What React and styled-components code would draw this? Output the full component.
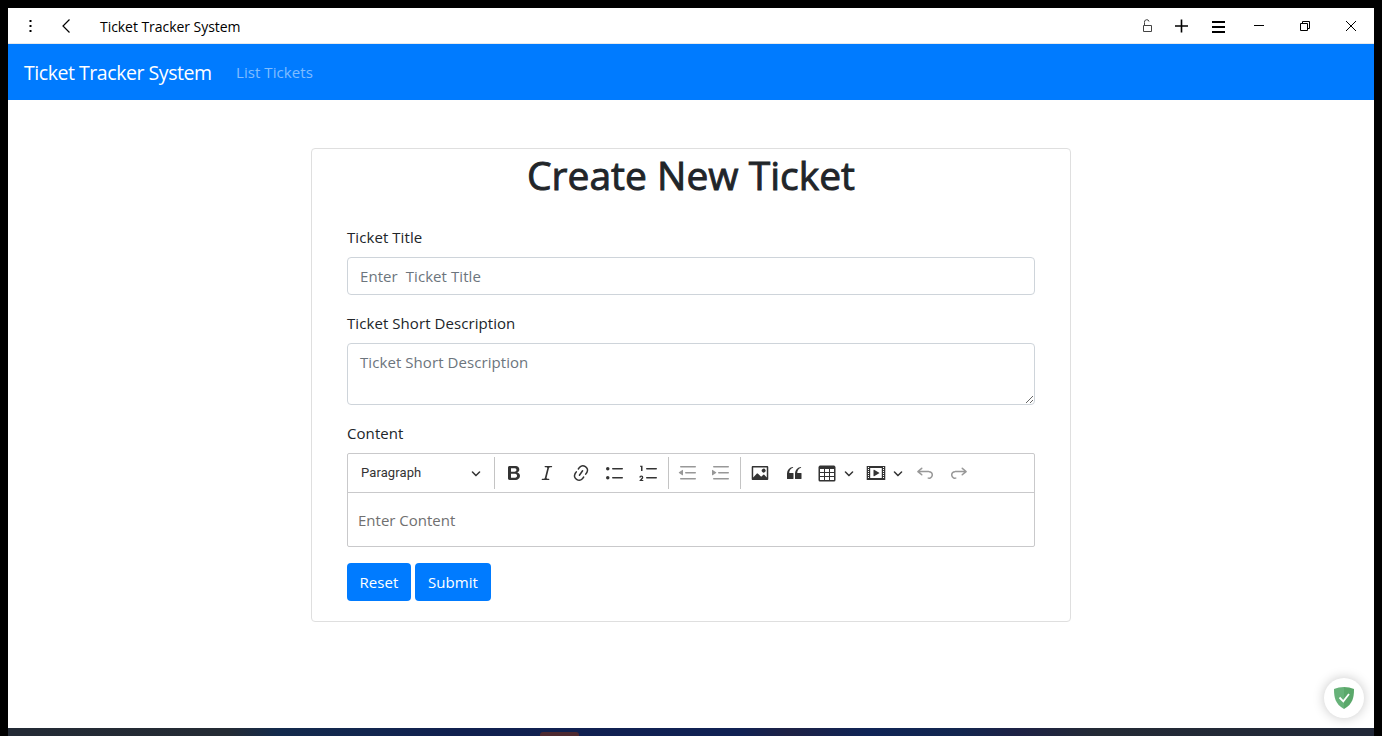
import React from "react";
import styled, { createGlobalStyle } from "styled-components";

const uiFont = `"Segoe UI", "Open Sans", "Noto Sans", sans-serif`;

const GlobalStyle = createGlobalStyle`
  *, *::before, *::after { box-sizing: border-box; }
  body { margin: 0; background: #000; overflow: hidden; }
  input, textarea, button { font: inherit; letter-spacing: inherit; }
`;

const Screen = styled.div`
  display: flex;
  flex-direction: column;
  width: 100vw;
  height: 100vh;
  padding: 8px 8px 0;
  background: #000;
  font-family: ${uiFont};
  font-size: 15px;
  letter-spacing: 0.07px;
  line-height: 24px;
  color: #212529;
`;

const Window = styled.div`
  position: relative;
  flex: 1;
  min-height: 0;
  display: flex;
  flex-direction: column;
  background: #fff;
`;

const TitleBar = styled.header`
  display: flex;
  align-items: center;
  height: 36px;
  padding: 0 15px;
  border-bottom: 1px solid #e6e9ec;
  color: #000;
`;

const WindowTitle = styled.span`
  flex: 1;
  margin-left: 25px;
  padding-top: 2px;
  font-size: 14px;
  letter-spacing: -0.05px;
`;

const BarIcon = styled.svg`
  width: 16px;
  height: 16px;
  margin-left: ${(p) => p.$gap || 0}px;
  fill: none;
  stroke: ${(p) => p.$color || "#000"};
  stroke-width: ${(p) => p.$weight || 1};
  flex: none;
`;

const Navbar = styled.nav`
  display: flex;
  align-items: center;
  height: 56px;
  flex: none;
  padding: 0 16px;
  background: #007bff;
`;

const Brand = styled.a`
  padding-top: 2px;
  font-size: 19.5px;
  line-height: 30px;
  letter-spacing: -0.45px;
  color: #fff;
  width: 188px;
  white-space: nowrap;
  margin-right: 24px;
`;

const NavLink = styled.a`
  color: rgba(255, 255, 255, 0.5);
  white-space: nowrap;
`;

const Page = styled.main`
  display: flex;
  justify-content: center;
  padding-top: 48px;
`;

const Card = styled.section`
  width: 760px;
  height: 474px;
  border: 1px solid #dfdfdf;
  border-radius: 4px;
`;

const Heading = styled.h1`
  margin: 0 0 8px;
  font-size: 39px;
  font-weight: 500;
  -webkit-text-stroke: 0.9px currentColor;
  line-height: 51px;
  height: 48px;
  text-align: center;
  white-space: nowrap;
  letter-spacing: 0;
`;

const Form = styled.form`
  padding: 20px 35px;
`;

const Group = styled.div`
  margin-bottom: 16px;
`;

const Label = styled.label`
  display: block;
  margin-bottom: 8px;
`;

const Field = styled.input`
  display: block;
  width: 100%;
  height: ${(p) => p.$height}px;
  padding: 6px 12px;
  border: 1px solid #ced4da;
  border-radius: 4px;
  background: #fff;
  outline: none;
  white-space: pre;
  &::placeholder { color: #6c757d; opacity: 1; }
`;

const Editor = styled.div`
  height: 94px;
  border: 1px solid #c9c9cb;
  border-radius: 2px;
`;

const Toolbar = styled.div`
  display: flex;
  align-items: center;
  height: 39px;
  border-bottom: 1px solid #c9c9cb;
  color: #333;
`;

const HeadingSelect = styled.div`
  display: flex;
  align-items: center;
  justify-content: space-between;
  width: 146px;
  padding: 0 13px;
  font-family: Roboto, Arial, sans-serif;
  font-size: 13px;
  letter-spacing: 0.1px;
`;

const Separator = styled.span`
  width: 1px;
  height: 32px;
  background: #c4c4c4;
`;

const Tool = styled.span`
  display: flex;
  align-items: center;
  justify-content: center;
  width: ${(p) => p.$width || 33.5}px;
  margin-left: ${(p) => p.$gap || 0}px;
  opacity: ${(p) => (p.$disabled ? 0.5 : 1)};
`;

const Glyph = styled.svg`
  width: ${(p) => p.$size || 20}px;
  height: ${(p) => p.$size || 20}px;
  fill: currentColor;
  flex: none;
`;

const EditorBody = styled.div`
  padding: 15px 10px;
  letter-spacing: 0;
  color: #707070;
`;

const Actions = styled.div`
  display: flex;
  gap: 4px;
`;

const Button = styled.button`
  width: ${(p) => p.$width}px;
  height: 38px;
  padding: 0;
  border: 0;
  border-radius: 4px;
  background: #007bff;
  color: #fff;
  text-align: center;
`;

const ShieldBadge = styled.div`
  position: absolute;
  right: 10px;
  bottom: 10px;
  width: 40px;
  height: 40px;
  display: flex;
  align-items: center;
  justify-content: center;
  border-radius: 50%;
  background: #fff;
  box-shadow: 0 0 12px rgba(0, 0, 0, 0.22);
`;

const Taskbar = styled.div`
  display: flex;
  align-items: flex-end;
  height: 8px;
  padding-left: 532px;
  background: linear-gradient(90deg, #232a35 0, #242b34 220px, #132a4c 270px, #12264f 360px, #10204f 450px, #102154 730px, #1d2145 780px, #0f2456 860px, #12264f 950px, #1d2145 1010px, #232a35 1090px, #212838 100%);
`;

const TaskItem = styled.span`
  width: 39px;
  height: 4px;
  border-radius: 3px 3px 0 0;
  background: #4d2930;
`;

const paths = {
  bold: "M10.187 17H5.773c-.637 0-1.092-.138-1.364-.415-.273-.277-.409-.718-.409-1.323V4.738c0-.617.14-1.062.419-1.332.279-.27.73-.406 1.354-.406h4.68c.69 0 1.288.041 1.793.124.506.083.96.242 1.36.478.341.197.644.447.906.75a3.262 3.262 0 0 1 .808 2.162c0 1.401-.722 2.426-2.167 3.075C15.05 10.175 16 11.315 16 13.01a3.756 3.756 0 0 1-2.296 3.504 6.1 6.1 0 0 1-1.517.377c-.571.073-1.238.11-2 .11zm-.217-6.217H7v4.087h3.069c1.977 0 2.965-.69 2.965-2.072 0-.707-.256-1.22-.768-1.537-.512-.319-1.277-.478-2.296-.478zM7 5.13v3.619h2.606c.729 0 1.292-.067 1.69-.2a1.6 1.6 0 0 0 .91-.765c.165-.267.247-.566.247-.897 0-.707-.26-1.176-.778-1.409-.519-.232-1.31-.348-2.375-.348H7z",
  italic: "m9.586 14.633.021.004c-.036.335.095.655.393.962.082.083.173.15.274.201h1.474a.6.6 0 1 1 0 1.2H5.304a.6.6 0 0 1 0-1.2h1.15c.474-.07.809-.182 1.005-.334.157-.122.291-.32.404-.597l2.416-9.55a1.053 1.053 0 0 0-.281-.823 1.12 1.12 0 0 0-.442-.296H8.15a.6.6 0 0 1 0-1.2h6.443a.6.6 0 1 1 0 1.2h-1.195c-.376.056-.65.155-.823.296-.215.175-.423.439-.623.79l-2.366 9.347z",
  link: "m11.077 15 .991-1.416a.75.75 0 1 1 1.229.86l-1.148 1.64a.748.748 0 0 1-.217.206 5.251 5.251 0 0 1-8.503-5.955.741.741 0 0 1 .12-.274l1.147-1.639a.75.75 0 1 1 1.228.86L4.933 10.7l.006.003a3.75 3.75 0 0 0 6.132 4.294l.006.004zm5.494-5.335a.748.748 0 0 1-.12.274l-1.147 1.639a.75.75 0 1 1-1.228-.86l.86-1.23a3.75 3.75 0 0 0-6.144-4.301l-.86 1.229a.75.75 0 0 1-1.229-.86l1.148-1.64a.748.748 0 0 1 .217-.206 5.251 5.251 0 0 1 8.503 5.955zm-4.563-2.532a.75.75 0 0 1 .184 1.045l-3.155 4.505a.75.75 0 1 1-1.229-.86l3.155-4.506a.75.75 0 0 1 1.045-.184z",
  bullets: "M7 5.75c0 .414.336.75.75.75h9.5a.75.75 0 1 0 0-1.5h-9.5a.75.75 0 0 0-.75.75zm-6 0a1.75 1.75 0 1 0 3.5 0a1.75 1.75 0 1 0-3.5 0zm6 9c0 .414.336.75.75.75h9.5a.75.75 0 1 0 0-1.5h-9.5a.75.75 0 0 0-.75.75zm-6 0a1.75 1.75 0 1 0 3.5 0a1.75 1.75 0 1 0-3.5 0z",
  numbers: "M7 5.75c0 .414.336.75.75.75h9.5a.75.75 0 1 0 0-1.5h-9.5a.75.75 0 0 0-.75.75zM3.5 3v5H2V3.7H1v-1h2.5V3zM.343 17.857l2.59-3.257H2.92a.6.6 0 1 0-1.04 0H.302a2 2 0 1 1 3.995 0h-.001c-.048.405-.16.734-.333.988-.175.254-.59.692-1.244 1.312H4.3v1h-4l.043-.043zM7 14.75a.75.75 0 0 1 .75-.75h9.5a.75.75 0 1 1 0 1.5h-9.5a.75.75 0 0 1-.75-.75z",
  outdent: "M2 3.75c0 .414.336.75.75.75h14.5a.75.75 0 1 0 0-1.5H2.75a.75.75 0 0 0-.75.75zm5 6c0 .414.336.75.75.75h9.5a.75.75 0 1 0 0-1.5h-9.5a.75.75 0 0 0-.75.75zM2.75 16.5h14.5a.75.75 0 1 0 0-1.5H2.75a.75.75 0 1 0 0 1.5zm1.618-9.55L.98 9.358a.4.4 0 0 0 .013.661l3.39 2.207A.4.4 0 0 0 5 11.892V7.275a.4.4 0 0 0-.632-.326z",
  indent: "M2 3.75c0 .414.336.75.75.75h14.5a.75.75 0 1 0 0-1.5H2.75a.75.75 0 0 0-.75.75zm5 6c0 .414.336.75.75.75h9.5a.75.75 0 1 0 0-1.5h-9.5a.75.75 0 0 0-.75.75zM2.75 16.5h14.5a.75.75 0 1 0 0-1.5H2.75a.75.75 0 1 0 0 1.5zM1.632 6.95 5.02 9.358a.4.4 0 0 1-.013.661l-3.39 2.207A.4.4 0 0 1 1 11.892V7.275a.4.4 0 0 1 .632-.326z",
  image: "M6.91 10.54c.26-.23.64-.21.88.03l3.36 3.14 2.23-2.06a.64.64 0 0 1 .87 0l2.52 2.97V4.5H3.2v10.12l3.71-4.08zm10.27-7.51c.6 0 1.09.47 1.09 1.05v11.84c0 .59-.49 1.06-1.09 1.06H2.79c-.6 0-1.09-.47-1.09-1.06V4.08c0-.58.49-1.05 1.1-1.05h14.38zm-5.22 5.56a1.96 1.96 0 1 1 3.4-1.96 1.96 1.96 0 0 1-3.4 1.96z",
  quote: "M3 10.423a6.5 6.5 0 0 1 6.056-6.408l.038.67C6.448 5.423 5.354 7.663 5.22 10H9c.552 0 .5.432.5.986v4.511c0 .554-.448.503-1 .503h-5c-.552 0-.5-.449-.5-1.003v-4.574zm8 0a6.5 6.5 0 0 1 6.056-6.408l.038.67c-2.646.739-3.74 2.979-3.873 5.315H17c.552 0 .5.432.5.986v4.511c0 .554-.448.503-1 .503h-5c-.552 0-.5-.449-.5-1.003v-4.574z",
  table: "M3 6v3h4V6H3zm0 4v3h4v-3H3zm0 4v3h4v-3H3zm5 3h4v-3H8v3zm5 0h4v-3h-4v3zm4-4v-3h-4v3h4zm0-4V6h-4v3h4zm1.500 8a1.500 1.500 0 0 1-1.500 1.500H3A1.500 1.500 0 0 1 1.500 17V4c.222-.863 1.068-1.500 2-1.500h13c.932 0 1.778.637 2 1.500v13zM12 13v-3H8v3h4zm0-4V6H8v3h4z",
  media: "M18.68 3.03c.6 0 .59-.03.59.55v12.84c0 .59.01.56-.59.56H1.29c-.6 0-.59.03-.59-.56V3.58c0-.58-.01-.55.6-.55h17.38zM15.77 15V5H4.2v10h11.57zM2 4v1h1V4H2zm0 2v1h1V6H2zm0 2v1h1V8H2zm0 2v1h1v-1H2zm0 2v1h1v-1H2zm0 2v1h1v-1H2zM17 4v1h1V4h-1zm0 2v1h1V6h-1zm0 2v1h1V8h-1zm0 2v1h1v-1h-1zm0 2v1h1v-1h-1zm0 2v1h1v-1h-1zM7.500 7.177a.4.4 0 0 1 .593-.351l5.133 2.824a.4.4 0 0 1 0 .7l-5.133 2.824a.4.4 0 0 1-.593-.35V7.176v.001z",
  undo: "m5.042 9.367 2.189 1.837a.75.75 0 0 1-.965 1.149l-3.788-3.18a.747.747 0 0 1-.21-.284.75.75 0 0 1 .17-.945L6.23 4.762a.75.75 0 1 1 .964 1.15L4.863 7.866h8.917A.75.75 0 0 1 14 7.9a4 4 0 1 1-1.477 7.718l.344-1.489a2.5 2.5 0 1 0 1.094-4.73l.008-.032H5.042z",
  chevron: "M.941 4.523a.75.75 0 1 1 1.06-1.06l3.006 3.005 3.005-3.005a.75.75 0 1 1 1.06 1.06l-3.549 3.55a.75.75 0 0 1-1.168-.136L.941 4.523z",
};

const Icon = ({ name, flip }) => (
  <Glyph viewBox="0 0 20 20">
    <path d={paths[name]} fillRule="evenodd" transform={flip ? "translate(20 0) scale(-1 1)" : undefined} />
  </Glyph>
);

const Chevron = () => (
  <Glyph $size={10} viewBox="0 0 10 10">
    <path d={paths.chevron} />
  </Glyph>
);

export default function App() {
  return (
    <Screen>
      <GlobalStyle />
      <Window>
        <TitleBar>
          <BarIcon viewBox="0 0 16 16">
            <path d="M6.500 2h2v2h-2zM6.500 7h2v2h-2zM6.500 12h2v2h-2z" fill="#000" stroke="none" />
          </BarIcon>
          <BarIcon viewBox="0 0 16 16" $gap={20} $weight={1.2}>
            <path d="M10.500 1.500 4 8l6.500 6.500" />
          </BarIcon>
          <WindowTitle>Ticket Tracker System</WindowTitle>
          <BarIcon viewBox="0 0 16 16" $color="#444">
            <path d="M4.500 7.500h8v6h-8zM5.500 7.500V4.500a2 2 0 0 1 4.500-1" />
          </BarIcon>
          <BarIcon viewBox="0 0 16 16" $gap={18} $weight={1.6}>
            <path d="M2 8h13M8.500 1.500v13" />
          </BarIcon>
          <BarIcon viewBox="0 0 16 16" $gap={22} $weight={2}>
            <path d="M1 4h13M1 9h13M1 14h13" />
          </BarIcon>
          <BarIcon viewBox="0 0 16 16" $gap={24}>
            <path d="M3 7.500h10" />
          </BarIcon>
          <BarIcon viewBox="0 0 16 16" $gap={30}>
            <path d="M3.500 5.500h7v7h-7zM5.500 5.500v-2h7v7h-2" />
          </BarIcon>
          <BarIcon viewBox="0 0 16 16" $gap={30}>
            <path d="m3 3 10 10M13 3 3 13" />
          </BarIcon>
        </TitleBar>
        <Navbar>
          <Brand>Ticket Tracker System</Brand>
          <NavLink>List Tickets</NavLink>
        </Navbar>
        <Page>
          <Card>
            <Heading>Create New Ticket</Heading>
            <Form>
              <Group>
                <Label>Ticket Title</Label>
                <Field $height={38} placeholder="Enter  Ticket Title" />
              </Group>
              <Group>
                <Label>Ticket Short Description</Label>
                <Field as="textarea" $height={62} placeholder="Ticket Short Description" />
              </Group>
              <Group>
                <Label>Content</Label>
                <Editor>
                  <Toolbar>
                    <HeadingSelect>
                      Paragraph
                      <Chevron />
                    </HeadingSelect>
                    <Separator />
                    <Tool $gap={2}><Icon name="bold" /></Tool>
                    <Tool><Icon name="italic" /></Tool>
                    <Tool><Icon name="link" /></Tool>
                    <Tool $width={34}><Icon name="bullets" /></Tool>
                    <Tool $gap={0.5}><Icon name="numbers" /></Tool>
                    <Tool $width={5.5}><Separator /></Tool>
                    <Tool $disabled><Icon name="outdent" /></Tool>
                    <Tool $width={33} $disabled><Icon name="indent" /></Tool>
                    <Tool $width={5.5}><Separator /></Tool>
                    <Tool><Icon name="image" /></Tool>
                    <Tool $gap={0.5}><Icon name="quote" /></Tool>
                    <Tool $width={33}><Icon name="table" /></Tool>
                    <Tool $width={10}><Chevron /></Tool>
                    <Tool $gap={5.5}><Icon name="media" /></Tool>
                    <Tool $width={10}><Chevron /></Tool>
                    <Tool $gap={5.5} $disabled><Icon name="undo" /></Tool>
                    <Tool $gap={0.5} $disabled><Icon name="undo" flip /></Tool>
                  </Toolbar>
                  <EditorBody>Enter Content</EditorBody>
                </Editor>
              </Group>
              <Actions>
                <Button type="button" $width={64}>Reset</Button>
                <Button type="button" $width={76}>Submit</Button>
              </Actions>
            </Form>
          </Card>
        </Page>
        <ShieldBadge>
          <svg width="22" height="24" viewBox="0 0 22 24">
            <path d="M11 1C7.500 1 4 1.800 1 3c0 8 1 15 10 20V1Z" fill="#67b279" />
            <path d="M11 1c3.500 0 7 .8 10 2 0 8-1 15-10 20V1Z" fill="#5aa86a" />
            <path d="m6.500 11.500 3.800 3.800L16 8" fill="none" stroke="#fff" strokeWidth="1.800" />
          </svg>
        </ShieldBadge>
      </Window>
      <Taskbar>
        <TaskItem />
      </Taskbar>
    </Screen>
  );
}
